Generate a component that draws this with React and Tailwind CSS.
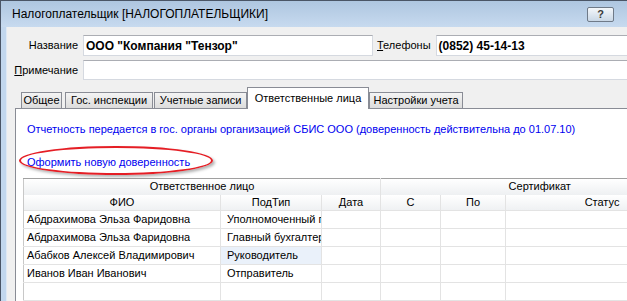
const font = { fontFamily: '"Liberation Sans", Arial, sans-serif' };

const rows = [
  { fio: 'Абдрахимова Эльза Фаридовна', type: 'Уполномоченный представитель' },
  { fio: 'Абдрахимова Эльза Фаридовна', type: 'Главный бухгалтер' },
  { fio: 'Абабков Алексей Владимирович', type: 'Руководитель', focus: true },
  { fio: 'Иванов Иван Иванович', type: 'Отправитель' },
  { fio: '', type: '' },
];

function Tab({ label, width, active }) {
  if (active) {
    return (
      <div
        className={`relative z-10 -mb-px flex h-[22px] items-start justify-center whitespace-nowrap border border-b-0 border-[#898c95] bg-white pt-[4px] text-[11px] leading-[13px] text-black ${width}`}
      >
        {label}
      </div>
    );
  }
  return (
    <div
      className={`flex h-[16px] items-center justify-center whitespace-nowrap border border-b-0 border-[#898c95] bg-gradient-to-b from-[#f4f4f4] to-[#dcdcdc] text-[11px] leading-[13px] text-black ${width}`}
    >
      {label}
    </div>
  );
}

export default function App() {
  return (
    <div className="h-[301px] w-[627px] overflow-hidden bg-[#c2d7ee]" style={font}>
      {/* title bar */}
      <div className="flex h-[27px] items-center justify-between border-t border-l border-[#4a5566] bg-gradient-to-b from-[#aec6e0] to-[#c7daef] pl-[11px] pr-[13px]">
        <span className="text-[12px] text-black">Налогоплательщик [НАЛОГОПЛАТЕЛЬЩИКИ]</span>
        <div className="flex h-[15px] w-[27px] items-center justify-center rounded-[2px] border border-[#6f7a88] bg-gradient-to-b from-[#f4f7fa] to-[#c9d7e6] text-[11px] font-bold leading-none text-[#3a3a3a]">
          ?
        </div>
      </div>

      <div className="flex h-[274px] border-l border-[#4a5566]">
        <div className="w-[6px] shrink-0 border-r border-[#dfe9f5] bg-[#c2d7ee]" />

        {/* client area */}
        <div className="flex w-[700px] shrink-0 flex-col bg-[#f0f0f0] pt-[8px]">
          <div className="flex h-[21px] items-center">
            <span className="w-[71px] text-right text-[11px] text-black">Название</span>
            <div className="ml-[5px] flex h-[21px] w-[290px] items-center border border-[#d5d9e0] border-t-[#abadb3] bg-white px-[2px] text-[12px] font-bold text-black">
              ООО "Компания "Тензор"
            </div>
            <span className="ml-[4px] text-[11px] text-black">
              <span className="underline">Т</span>елефоны
            </span>
            <div className="ml-[5px] flex h-[21px] flex-1 items-center border border-[#d5d9e0] border-t-[#abadb3] bg-white px-[2px] text-[12px] font-bold text-black">
              (0852) 45-14-13
            </div>
          </div>

          <div className="mt-[4px] flex h-[20px] items-center">
            <span className="w-[71px] text-right text-[11px] text-black">
              <span className="underline">П</span>римечание
            </span>
            <div className="ml-[5px] h-[20px] flex-1 border border-[#d5d9e0] border-t-[#abadb3] bg-white" />
          </div>

          {/* tabs */}
          <div className="mt-[7px] flex items-end pl-[14px]">
            <Tab label="Общее" width="w-[41px]" />
            <div className="w-[3px]" />
            <Tab label="Гос. инспекции" width="w-[88px]" />
            <div className="w-[1px]" />
            <Tab label="Учетные записи" width="w-[93px]" />
            <Tab label="Ответственные лица" width="w-[122px]" active />
            <Tab label="Настройки учета" width="w-[94px]" />
          </div>

          <div className="ml-[8px] flex-1 border-t border-l border-[#898c95] bg-white pl-[11px] pt-[13px] text-[11px] leading-[14px]">
            <p className="text-[#0000f0]">
              Отчетность передается в гос. органы организацией СБИС ООО (доверенность действительна до 01.07.10)
            </p>

            <div className="mt-[19px] h-[14px]">
              <span className="relative inline-block text-[#0000f0]">
                Оформить новую доверенность
                <span className="absolute -left-[8px] -top-[9px] h-[29px] w-[194px] rounded-[50%] border-2 border-[#e51e25] shadow-[2px_2px_3px_rgba(0,0,0,0.3)]" />
              </span>
            </div>

            <table className="ml-[-4px] mt-[9px] w-[675px] table-fixed border-collapse text-[11px] text-black">
              <colgroup>
                <col className="w-[197px]" />
                <col className="w-[101px]" />
                <col className="w-[59px]" />
                <col className="w-[60px]" />
                <col className="w-[65px]" />
                <col className="w-[193px]" />
              </colgroup>
              <thead>
                <tr className="h-[16px] bg-gradient-to-b from-white to-[#eef0f2]">
                  <th colSpan={3} className="border-t border-l border-r border-t-[#a0a0a0] border-l-[#c8c8c8] border-r-[#e3e3e3] p-0 text-center font-normal leading-[15px]">
                    Ответственное лицо
                  </th>
                  <th colSpan={3} className="border-t border-t-[#a0a0a0] p-0 text-center font-normal leading-[15px]">
                    Сертификат
                  </th>
                </tr>
                <tr className="h-[16px] bg-gradient-to-b from-white to-[#eef0f2]">
                  {['ФИО', 'ПодТип', 'Дата', 'С', 'По', 'Статус'].map((h, i) => (
                    <th
                      key={h}
                      className={`border-r border-[#e3e3e3] p-0 text-center font-normal leading-[15px] ${i === 0 ? 'border-l border-l-[#c8c8c8]' : ''}`}
                    >
                      {h}
                    </th>
                  ))}
                </tr>
              </thead>
              <tbody>
                {rows.map((r, i) => (
                  <tr key={i} className="h-[18px]">
                    <td className="overflow-hidden whitespace-nowrap border border-[#e3e3e3] border-l-[#c8c8c8] py-0 pl-[3px] leading-[17px]">
                      {r.fio}
                    </td>
                    <td
                      className={`overflow-hidden whitespace-nowrap border border-[#e3e3e3] py-0 pl-[6px] leading-[17px] ${r.focus ? 'bg-[#eaf1fa]' : ''}`}
                    >
                      {r.type}
                    </td>
                    <td className="border border-[#e3e3e3] p-0" />
                    <td className="border border-[#e3e3e3] p-0" />
                    <td className="border border-[#e3e3e3] p-0" />
                    <td className="border border-[#e3e3e3] p-0" />
                  </tr>
                ))}
              </tbody>
            </table>
          </div>
        </div>
      </div>
    </div>
  );
}
